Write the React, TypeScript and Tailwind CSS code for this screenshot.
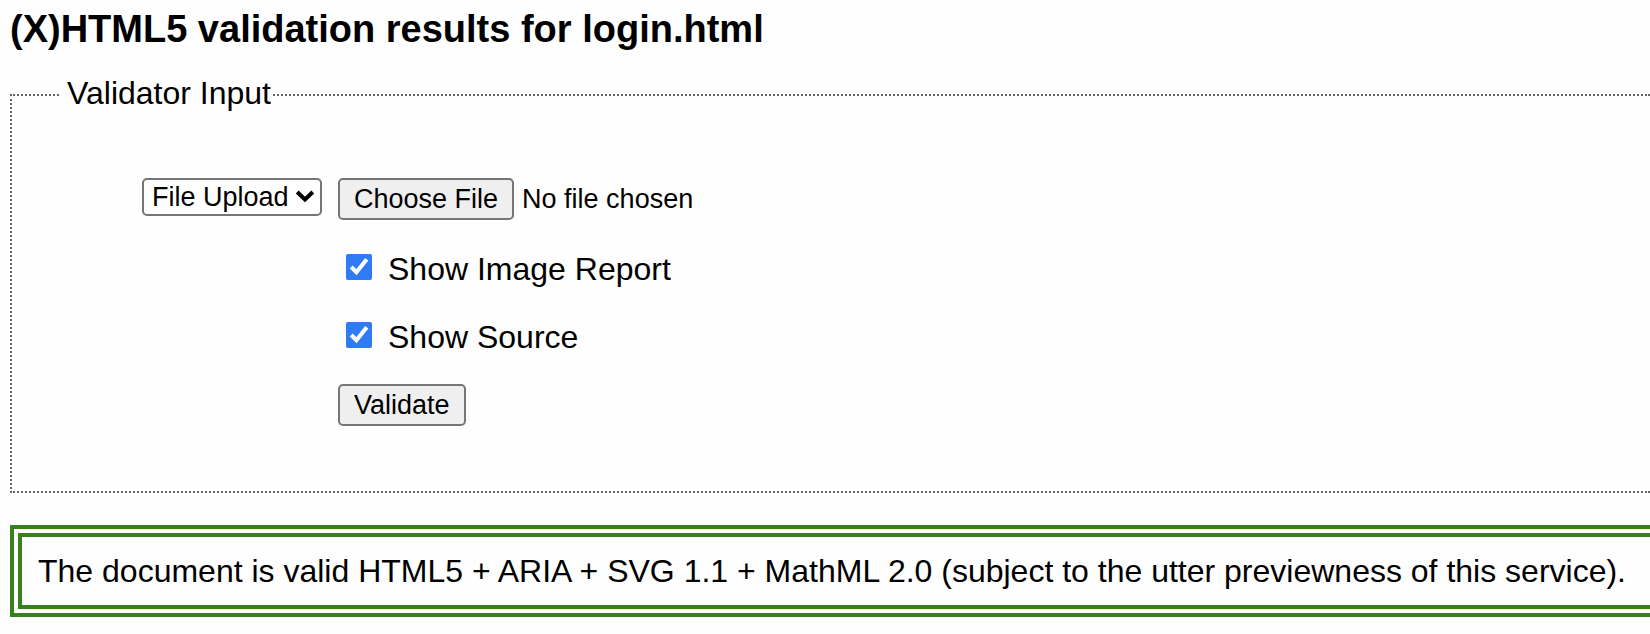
import { useState } from "react";

function Option({ label }: { label: string }) {
  const [checked, setChecked] = useState(true);
  return (
    <label className="flex w-fit items-start gap-4 pl-2 text-[32px] leading-[30px]">
      <input
        type="checkbox"
        checked={checked}
        onChange={(e) => setChecked(e.target.checked)}
        className="m-0 size-[26px] shrink-0 accent-[#2f7bf6]"
      />
      <span>{label}</span>
    </label>
  );
}

export default function App() {
  return (
    <main className="min-h-screen bg-[#fefefe] pt-[7px] pb-3 pl-[10px] font-['Liberation_Sans',Arial,sans-serif] text-black">
      <h1 className="text-[38px] leading-[44px] font-bold">
        (X)HTML5 validation results for login.html
      </h1>

      <form onSubmit={(e) => e.preventDefault()} className="mt-6">
        <fieldset className="border-2 border-r-0 border-dotted border-[#666666] pb-[65px] pl-[130px]">
          <legend className="-ml-[82px] pr-[2px] pb-1 pl-[7px] text-[32px] leading-9">Validator Input</legend>
          <div className="flex items-start gap-4 pt-[63px]">
            <div className="relative shrink-0">
              <select
                aria-label="Input method"
                className="block h-[38px] w-[180px] appearance-none rounded-[5px] border-2 border-[#767676] bg-white pl-2 text-[27px] leading-8"
              >
                <option>File Upload</option>
                <option>Address</option>
                <option>Text Field</option>
              </select>
              <svg
                viewBox="0 0 20 14"
                className="pointer-events-none absolute top-3 right-[7px] h-[14px] w-5"
                fill="none"
                stroke="black"
                strokeWidth="4"
              >
                <path d="M2.2 2 L10 9.5 L17.8 2" />
              </svg>
            </div>
            <div className="flex flex-col items-start">
              <input
                type="file"
                aria-label="File"
                className="h-[42px] w-[420px] text-[27px] leading-[38px] file:mr-2 file:box-border file:h-[42px] file:rounded-[5px] file:border-2 file:border-solid file:border-[#767676] file:bg-[#efefef] file:px-[14px] file:text-[27px] file:leading-[38px] file:text-black"
              />
              <div className="flex flex-col gap-[38px] pt-[34px] pb-8">
                <Option label="Show Image Report" />
                <Option label="Show Source" />
              </div>
              <button
                type="submit"
                className="h-[42px] rounded-[5px] border-2 border-[#767676] bg-[#efefef] px-[14px] text-[27px] leading-[38px]"
              >
                Validate
              </button>
            </div>
          </div>
        </fieldset>
      </form>

      <p className="mt-8 border-12 border-r-0 border-double border-[#37811f] px-4 py-4 text-[32px] leading-9">
        The document is valid HTML5 + ARIA + SVG 1.1 + MathML 2.0 (subject to the utter previewness of this service).
      </p>
    </main>
  );
}
